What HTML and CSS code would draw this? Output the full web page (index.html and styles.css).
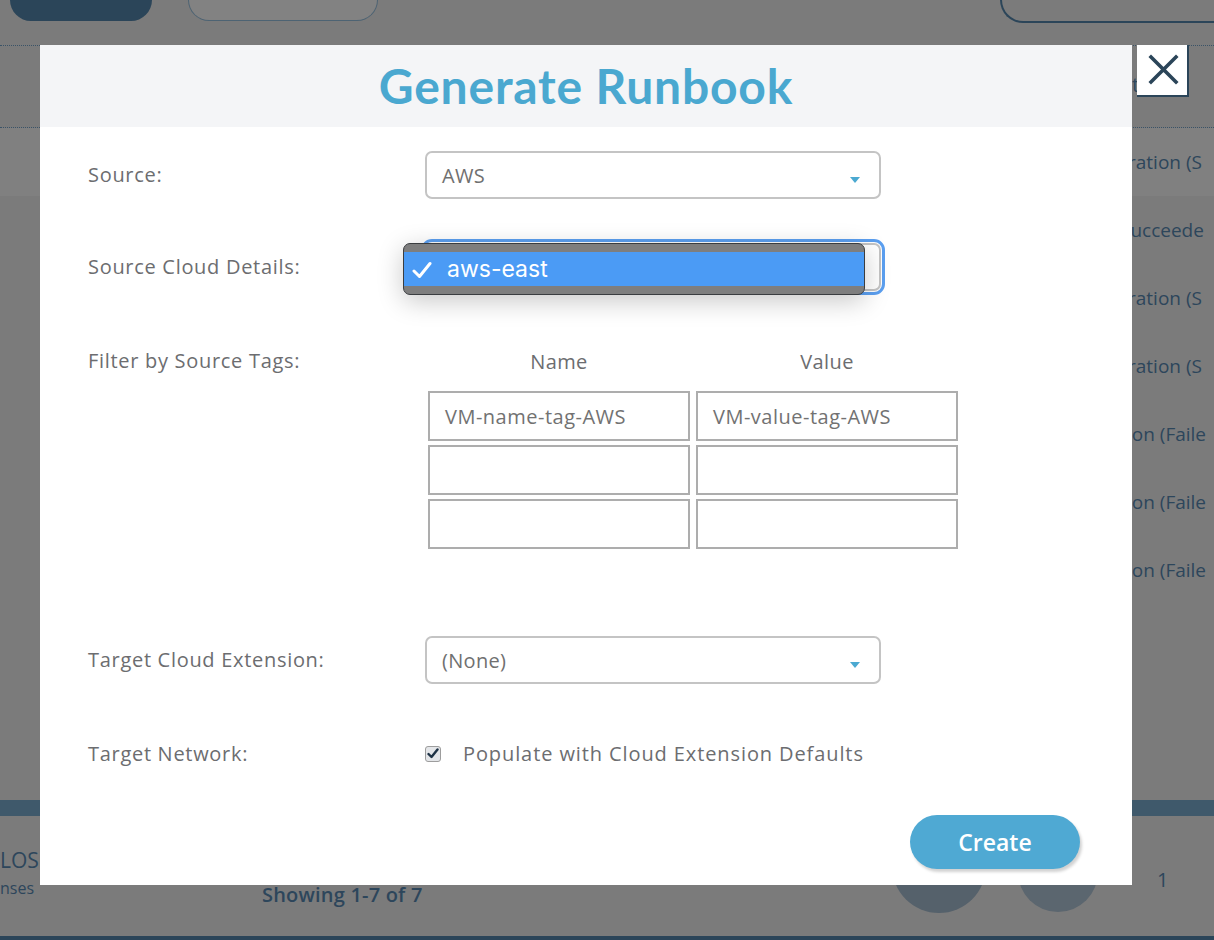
FILE: index.html
```html
<!DOCTYPE html>
<html lang="en">
<head>
<meta charset="utf-8">
<title>Generate Runbook</title>
<link rel="stylesheet" href="styles.css">
</head>
<body>
<div class="page" aria-hidden="true">
  <header class="bg-top">
    <div class="pill-solid"></div>
    <div class="pill-outline"></div>
    <div class="pill-right"></div>
  </header>
  <div class="bg-subhead">t</div>
  <div class="bg-rows">
    <div class="bg-row hl r-ration">ration (S</div>
    <div class="bg-row r-succ">Succeede</div>
    <div class="bg-row r-ration">ration (S</div>
    <div class="bg-row r-ration">ration (S</div>
    <div class="bg-row r-fail">ion (Faile</div>
    <div class="bg-row r-fail">ion (Faile</div>
    <div class="bg-row r-fail">ion (Faile</div>
  </div>
  <div class="bg-band"></div>
  <footer class="bg-footer">
    <div class="ft-left">
      <div class="ft-los">LOS</div>
      <div class="ft-nses">nses</div>
    </div>
    <div class="ft-showing">Showing 1-7 of 7</div>
    <div class="ft-circle c1"></div>
    <div class="ft-circle c2"></div>
    <div class="ft-page">1</div>
  </footer>
  <div class="bg-bottom"></div>
</div>

<div class="modal" role="dialog" aria-labelledby="dlg-title">
  <div class="modal-head"><h1 id="dlg-title">Generate Runbook</h1></div>
  <div class="modal-body">
    <div class="field f-source">
      <label>Source:</label>
      <div class="select"><span class="sel-text">AWS</span><i class="caret"></i></div>
    </div>
    <div class="field f-cloud">
      <label>Source Cloud Details:</label>
      <div class="select focused">
        <div class="popup">
          <div class="opt">
            <svg class="opt-check" width="20" height="18" viewBox="0 0 20 18"><path d="M2 10 L7.5 15.5 L18 2.5" fill="none" stroke="#fff" stroke-width="3" stroke-linecap="round" stroke-linejoin="round"/></svg>
            <span>aws-east</span>
          </div>
        </div>
      </div>
    </div>
    <div class="field f-tags">
      <label>Filter by Source Tags:</label>
      <div class="tags">
        <div class="tags-head"><span>Name</span><span>Value</span></div>
        <div class="tags-grid">
          <div class="cell">VM-name-tag-AWS</div>
          <div class="cell">VM-value-tag-AWS</div>
          <div class="cell"></div>
          <div class="cell"></div>
          <div class="cell"></div>
          <div class="cell"></div>
        </div>
      </div>
    </div>
    <div class="field f-target">
      <label>Target Cloud Extension:</label>
      <div class="select"><span class="sel-text">(None)</span><i class="caret"></i></div>
    </div>
    <div class="field f-net">
      <label>Target Network:</label>
      <div class="checkline">
        <span class="cbox"><svg width="12" height="11" viewBox="0 0 12 11"><path d="M1.5 6 L4.5 9 L10.5 1.5" fill="none" stroke="#1f3346" stroke-width="2.4" stroke-linecap="round" stroke-linejoin="round"/></svg></span>
        <span class="check-text">Populate with Cloud Extension Defaults</span>
      </div>
    </div>
    <div class="actions"><button class="btn-create" type="button">Create</button></div>
  </div>
</div>
<button class="close" type="button" aria-label="Close">
  <svg width="48" height="50" viewBox="0 0 48 50"><path d="M13 12 L38 37 M38 12 L13 37" stroke="#2b4559" stroke-width="3.6" stroke-linecap="square"/></svg>
</button>
</body>
</html>
```

FILE: styles.css
```css
* { box-sizing: border-box; }
html, body { margin: 0; padding: 0; }
body {
  width: 1214px;
  height: 940px;
  overflow: hidden;
  background: #7b7b7b;
  font-family: "Open Sans", "Liberation Sans", sans-serif;
}

/* ---------- background page (under overlay) ---------- */
.page {
  width: 1214px;
  height: 940px;
  display: flex;
  flex-direction: column;
  overflow: hidden;
  color: #2d465b;
}
.bg-top {
  height: 46px;
  flex: none;
  display: flex;
  align-items: flex-start;
  border-bottom: 1px dotted #3a5368;
}
.pill-solid {
  margin-left: 10px;
  width: 142px;
  height: 21px;
  background: #2b4559;
  border-radius: 0 0 22px 22px;
}
.pill-outline {
  margin-left: 36px;
  width: 190px;
  height: 21px;
  background: #828282;
  border: 1px solid #4d6373;
  border-top: 0;
  border-radius: 0 0 22px 22px;
}
.pill-right {
  margin-left: auto;
  width: 214px;
  height: 23px;
  border-left: 2px solid #2b4559;
  border-bottom: 2px solid #2b4559;
  border-radius: 0 0 0 24px;
}
.bg-subhead {
  height: 82px;
  flex: none;
  border-bottom: 1px dotted #3a5368;
  padding-left: 1132px;
  font-size: 20px;
  line-height: 78px;
  white-space: nowrap;
}
.bg-rows { flex: none; }
.bg-row {
  height: 68px;
  line-height: 68px;
  font-size: 19px;
  white-space: nowrap;
}
.bg-row.hl { background: #808080; }
.r-ration { padding-left: 1128px; }
.r-succ { padding-left: 1120px; }
.r-fail { padding-left: 1127px; }
.bg-band {
  flex: none;
  margin-top: 196px;
  height: 16px;
  background: #3f596b;
}
.bg-footer {
  flex: none;
  height: 120px;
  display: grid;
  grid-template-columns: 262px 628px 128px 139px 1fr;
  align-items: start;
}
.ft-left { margin-top: 32px; }
.ft-los { font-size: 21px; line-height: 24px; }
.ft-nses { font-size: 16px; line-height: 20px; margin-top: 6px; }
.ft-showing {
  margin-top: 65px;
  font-size: 20px;
  font-weight: 600;
  line-height: 28px;
  letter-spacing: 0.2px;
}
.ft-circle { border-radius: 50%; background: #55616b; }
.ft-circle.c1 { width: 94px; height: 94px; margin-top: 3px; margin-left: 2px; }
.ft-circle.c2 { width: 80px; height: 80px; margin-top: 16px; margin-left: 0; background: #5b666f; }
.ft-page { margin-top: 52px; font-size: 20px; line-height: 24px; }
.bg-bottom { flex: none; height: 4px; background: #2b4559; }

/* ---------- modal ---------- */
.modal {
  position: fixed;
  left: 40px;
  top: 45px;
  width: 1092px;
  height: 840px;
  background: #fff;
  display: flex;
  flex-direction: column;
}
.modal-head {
  height: 82px;
  flex: none;
  background: #f4f5f7;
  display: flex;
  align-items: center;
  justify-content: center;
}
.modal-head h1 {
  margin: 0;
  font-family: Lato, "Open Sans", sans-serif;
  font-weight: 700;
  font-size: 48px;
  line-height: 1;
  letter-spacing: 0.8px;
  color: #4aa8d0;
}
.modal-body {
  padding: 24px 52px 0 48px;
  display: flex;
  flex-direction: column;
}
.field {
  display: grid;
  grid-template-columns: 337px 456px;
  align-items: center;
}
.field label {
  font-size: 20px;
  line-height: 24px;
  letter-spacing: 0.7px;
  color: #6c6d70;
}
.f-source { height: 48px; }
.f-cloud { height: 48px; margin-top: 44px; }
.f-tags { margin-top: 58px; align-items: start; }
.f-target { height: 48px; margin-top: 87px; }
.f-net { height: 24px; margin-top: 56px; }

.select {
  height: 48px;
  border: 2px solid #c4c4c4;
  border-radius: 7px;
  padding: 0 19px 0 15px;
  display: flex;
  align-items: center;
  justify-content: space-between;
  background: #fff;
}
.sel-text {
  font-size: 20px;
  letter-spacing: 0.3px;
  color: #707070;
}
.caret {
  width: 0;
  height: 0;
  margin-top: 10px;
  border-left: 5.5px solid transparent;
  border-right: 5.5px solid transparent;
  border-top: 6px solid #4ba9d1;
}
.select.focused {
  position: relative;
  outline: 3px solid #5b9ff0;
  outline-offset: 1px;
}
.popup {
  position: absolute;
  left: -24px;
  top: -2px;
  width: 462px;
  height: 52px;
  border: 1px solid #3a3d40;
  border-radius: 7px;
  background: #7e7e7e;
  padding-top: 8px;
  box-shadow: 0 6px 26px rgba(0, 0, 0, 0.22);
  overflow: hidden;
}
.opt {
  height: 34px;
  background: #4b9bf5;
  display: flex;
  align-items: center;
  padding-left: 8px;
  gap: 15px;
  font-family: Inter, "Liberation Sans", sans-serif;
  font-size: 23px;
  color: #fff;
}
.opt-check { flex: none; margin-top: 1px; }

.tags { margin-left: 3px; }
.tags-head {
  display: grid;
  grid-template-columns: 262px 262px;
  column-gap: 6px;
  text-align: center;
  font-size: 20px;
  line-height: 26px;
  letter-spacing: 0.4px;
  color: #6c6d70;
}
.tags-grid {
  margin-top: 16px;
  display: grid;
  grid-template-columns: 262px 262px;
  gap: 4px 6px;
}
.cell {
  height: 50px;
  border: 2px solid #adadad;
  padding: 0 15px;
  display: flex;
  align-items: center;
  font-size: 20px;
  letter-spacing: 0.5px;
  color: #727272;
}

.checkline {
  display: flex;
  align-items: center;
  gap: 22px;
}
.cbox {
  width: 16px;
  height: 16px;
  border: 1px solid #9d9d9d;
  border-radius: 3px;
  background: #e4e6e9;
  display: flex;
  align-items: center;
  justify-content: center;
}
.check-text {
  font-size: 20px;
  letter-spacing: 0.9px;
  color: #6c6d70;
}

.actions {
  margin-top: 51px;
  display: flex;
  justify-content: flex-end;
}
.btn-create {
  width: 170px;
  height: 54px;
  border: 0;
  border-radius: 27px;
  background: #4fa9d3;
  color: #fff;
  font-family: "Open Sans", sans-serif;
  font-weight: 600;
  font-size: 23px;
  box-shadow: 2px 3px 3px rgba(0, 0, 0, 0.18);
}

.close {
  position: fixed;
  left: 1137px;
  top: 45px;
  width: 52px;
  height: 52px;
  padding: 0;
  background: #fff;
  border: 0;
  border-right: 2px solid #2b4559;
  border-bottom: 2px solid #2b4559;
  display: flex;
  align-items: center;
  justify-content: center;
}
```
